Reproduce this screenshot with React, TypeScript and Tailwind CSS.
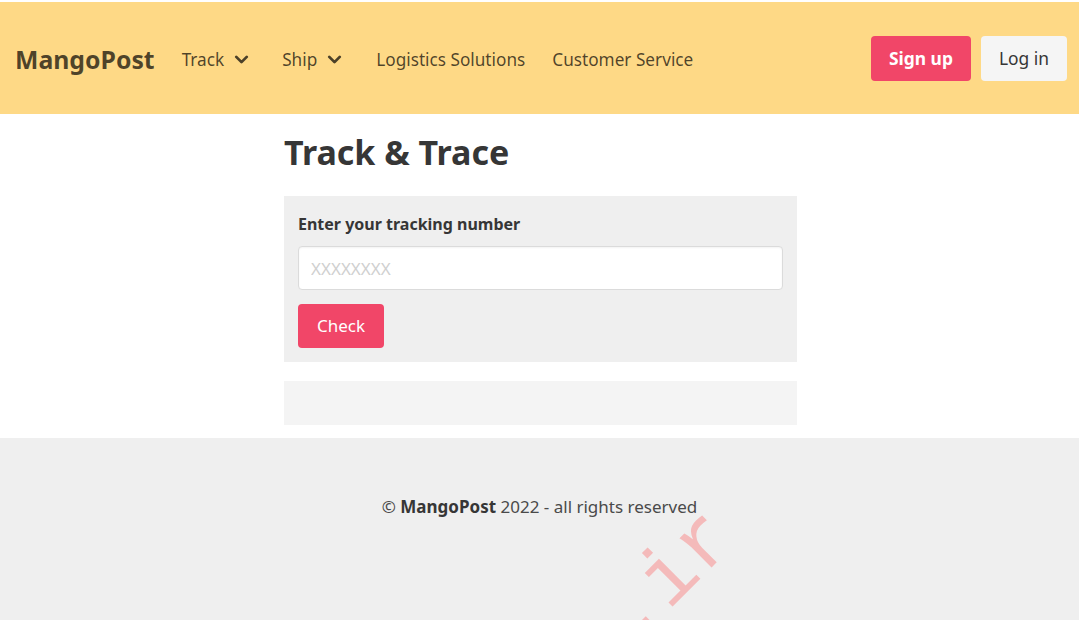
import { ChevronDown } from 'lucide-react'

function NavItem({ label, dropdown, className }: { label: string; dropdown?: boolean; className?: string }) {
  return (
    <a className={`mt-[3px] flex items-center gap-[7px] text-[17.2px] text-black/70 ${className ?? ''}`}>
      {label}
      {dropdown && <ChevronDown size={21} strokeWidth={3.2} className="mt-[1px]" />}
    </a>
  )
}

export default function App() {
  return (
    <div className="relative min-h-[620px] overflow-hidden bg-white pt-[2px] font-['Noto_Sans',sans-serif] text-[#4a4a4a]">
      <nav className="flex h-[112px] items-center bg-[#fed986] pl-[15px] pr-[12px]">
        <a className="mt-[3px] text-[24.8px] font-bold text-black/70">MangoPost</a>
        <NavItem label="Track" dropdown className="ml-[27px]" />
        <NavItem label="Ship" dropdown className="ml-[30px]" />
        <NavItem label="Logistics Solutions" className="ml-[31px]" />
        <NavItem label="Customer Service" className="ml-[27px]" />
        <div className="ml-auto flex items-center gap-[10px]">
          <button className="h-[45px] rounded-[4px] bg-[#f14668] px-[18px] text-[17.4px] font-bold text-white">
            Sign up
          </button>
          <button className="h-[45px] rounded-[4px] bg-[#f5f5f5] px-[18px] text-[17.4px] text-[#363636]">
            Log in
          </button>
        </div>
      </nav>

      <main className="ml-[284px] w-[513px] pb-[13px]">
        <h1 className="pt-[14px] pb-[20px] text-[34px] leading-[48px] font-bold text-[#363636]">Track &amp; Trace</h1>
        <div className="bg-[#efefef] px-[14px] pt-[15px] pb-[14px]">
          <label className="block text-[16px] leading-[26px] font-bold text-[#363636]">Enter your tracking number</label>
          <input
            placeholder="XXXXXXXX"
            className="mt-[9px] block h-[44px] w-full rounded-[4px] border border-[#dbdbdb] bg-white px-[12px] text-[17px] text-[#363636] placeholder:text-[#d0d0d0] shadow-[inset_0_1px_2px_rgba(10,10,10,0.05)] outline-none"
          />
          <button className="mt-[14px] h-[44px] rounded-[4px] bg-[#f14668] px-[19px] text-[17px] text-white">
            Check
          </button>
        </div>
        <div className="mt-[19px] h-[44px] bg-[#f4f4f4]" />
      </main>

      <footer className="h-[182px] bg-[#efefef] pt-[56px] text-center text-[17px] text-[#4a4a4a]">
        © <strong className="font-bold text-[#363636]">MangoPost</strong> 2022 - all rights reserved
      </footer>

      <svg className="pointer-events-none absolute inset-0" width="1079" height="620">
        <text
          x="738"
          y="541"
          textAnchor="end"
          transform="rotate(-45 738 541)"
          fontFamily="'Liberation Mono', monospace"
          fontSize="82"
          fill="#f4baba"
        >
          mangopost.ir
        </text>
      </svg>
    </div>
  )
}
